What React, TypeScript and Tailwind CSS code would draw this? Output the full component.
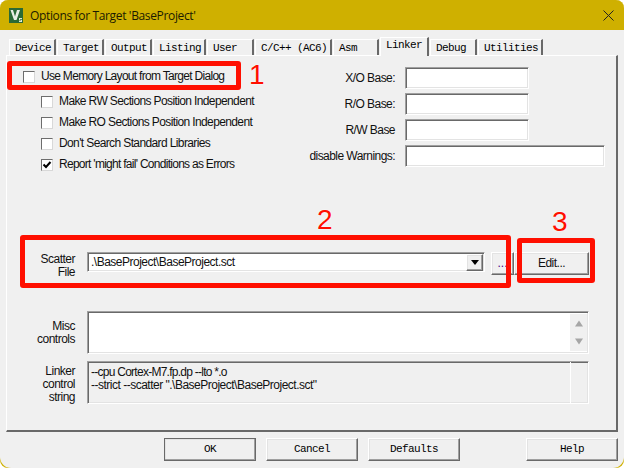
const sans = "font-['Liberation_Sans',Arial,sans-serif]";
const mono = "font-['Liberation_Mono','Courier_New',monospace]";
const sunken =
  "border border-t-[#a0a0a0] border-l-[#a0a0a0] border-r-white border-b-white shadow-[inset_1px_1px_0_#696969,inset_-1px_-1px_0_#e3e3e3]";
const raised =
  "border border-t-white border-l-white border-r-[#696969] border-b-[#696969] shadow-[inset_-1px_-1px_0_#a0a0a0,inset_1px_1px_0_#e3e3e3]";
const annotation = "absolute border-[5px] border-[#ff0f00] rounded-[3px]";
const digit =
  "absolute text-[28px] leading-[28px] text-[#ff0f00] font-['Liberation_Sans',sans-serif] [text-shadow:0_0_2px_#fff]";

const tabs = [
  { label: "Device", cls: "w-[47px]" },
  { label: "Target", cls: "w-[47px]" },
  { label: "Output", cls: "w-[47px]" },
  { label: "Listing", cls: "w-[53px]" },
  { label: "User", cls: "w-[47px]" },
  { label: "C/C++ (AC6)", cls: "w-[77px]" },
  { label: "Asm", cls: "w-[46px]" },
  { label: "Linker", cls: "w-[49px]", active: true },
  { label: "Debug", cls: "w-[47px]" },
  { label: "Utilities", cls: "w-[65px]" },
];

const options = [
  { label: "Make RW Sections Position Independent", cls: "tracking-[-0.62px]" },
  { label: "Make RO Sections Position Independent", cls: "tracking-[-0.62px]" },
  { label: "Don't Search Standard Libraries", cls: "tracking-[-0.62px]" },
  { label: "Report 'might fail' Conditions as Errors", cls: "tracking-[-0.72px]", checked: true },
];

const bases = [
  { label: "X/O Base:", cls: "w-[124px]" },
  { label: "R/O Base:", cls: "w-[124px]" },
  { label: "R/W Base", cls: "w-[124px]" },
  { label: "disable Warnings:", cls: "w-[200px]" },
];

function Checkbox({ checked }: { checked?: boolean }) {
  return (
    <span className="w-[12px] h-[12px] shrink-0 bg-white border border-t-[#6d6d6d] border-l-[#6d6d6d] border-r-[#d8d8d8] border-b-[#d8d8d8] flex items-center justify-center">
      {checked && (
        <svg width="10" height="10" viewBox="0 0 10 10">
          <path d="M1.5 4.5 L4 7 L8.5 2" fill="none" stroke="#000" strokeWidth="2" />
        </svg>
      )}
    </span>
  );
}

function FooterButton({ label, cls }: { label: string; cls: string }) {
  return (
    <div className={`${raised} ${cls} w-[92px] h-[23px] flex items-center justify-center text-[11px] tracking-[-0.6px] ${mono} text-black`}>
      {label}
    </div>
  );
}

function Arrow({ down }: { down?: boolean }) {
  return (
    <svg width="10" height="7" viewBox="0 0 10 7">
      <path d={down ? "M1 0.5 H9 L5 6.5 Z" : "M1 6.5 H9 L5 0.5 Z"} fill="#a6a6a6" />
    </svg>
  );
}

export default function App() {
  return (
    <div className={`relative w-[624px] h-[468px] bg-white overflow-hidden text-[12px] leading-[13px] text-[#111] ${sans}`}>
      <div className="w-full h-full bg-[#cfb000] rounded-[8px] overflow-hidden">
        <div className="w-full h-full bg-[#f0f0f0] rounded-b-[11px] flex flex-col">
          {/* Title bar */}
          <div className="h-[30px] shrink-0 bg-[#cfb000] flex items-center pl-[9px] pr-[10px]">
            <svg width="14" height="15" viewBox="0 0 14 15" className="shrink-0">
              <rect width="14" height="15" fill="#2b6a35" />
              <path d="M1.5 2 H4 L6 8.5 L8 2 H11 L7.5 12 H5 Z" fill="#e8efe4" />
              <path d="M5.5 2 H6.5 L6.5 6 Z" fill="#2b6a35" />
              <path d="M10 10 h3 v1 h-2 v.7 h2 v2.3 h-3 v-1 h2 v-.6 h-2 Z" fill="#dfe8d8" />
            </svg>
            <span className="ml-[7px] text-[12px] tracking-[-0.35px] text-[#1b1b00] font-['Open_Sans',sans-serif]">
              Options for Target 'BaseProject'
            </span>
            <svg width="11" height="11" viewBox="0 0 11 11" className="ml-auto">
              <path d="M0.5 0.5 L10.5 10.5 M10.5 0.5 L0.5 10.5" stroke="#222" strokeWidth="1" />
            </svg>
          </div>

          {/* Tabs */}
          <div className={`h-[25px] shrink-0 pl-[9px] flex items-end text-[11px] tracking-[-0.6px] text-black ${mono}`}>
            {tabs.map((t) => (
              <div
                key={t.label}
                className={`${t.cls} mr-[1px] pl-[5px] border-l border-t border-r-2 border-l-white border-t-white border-r-[#696969] whitespace-nowrap ${
                  t.active ? "relative z-10 h-[19px] -mb-[1px] bg-[#f0f0f0] pt-[1px]" : "h-[16px] pt-[2px] bg-[#f0f0f0]"
                }`}
              >
                {t.label}
              </div>
            ))}
          </div>

          {/* Linker page */}
          <div className="ml-[6px] w-[612px] h-[377px] shrink-0 border-l border-t border-r-2 border-b-2 border-l-white border-t-white border-r-[#696969] border-b-[#696969] flex flex-col">
            <div className="h-[196px] shrink-0 flex">
              <div className="w-[302px] shrink-0 pt-[10px] flex flex-col">
                <div className="h-[21px] pl-[16px] flex items-center gap-[6px]">
                  <Checkbox />
                  <span className="tracking-[-0.7px]">Use Memory Layout from Target Dialog</span>
                </div>
                <div className="mt-[4px] flex flex-col">
                  {options.map((o) => (
                    <div key={o.label} className="h-[21px] pl-[34px] flex items-center gap-[6px]">
                      <Checkbox checked={o.checked} />
                      <span className={o.cls}>{o.label}</span>
                    </div>
                  ))}
                </div>
              </div>
              <div className="pt-[11px] flex flex-col gap-[4px]">
                {bases.map((b) => (
                  <div key={b.label} className="h-[22px] flex items-center">
                    <span className="w-[86px] pt-[1px] text-right mr-[10px] whitespace-nowrap tracking-[-0.55px]">{b.label}</span>
                    <div className={`${sunken} ${b.cls} h-[22px] bg-white`} />
                  </div>
                ))}
              </div>
            </div>

            {/* Scatter file */}
            <div className="h-[23px] shrink-0 flex">
              <div className="w-[68px] pt-[1px] text-right tracking-[-0.5px]">Scatter<br />File</div>
              <div className={`${sunken} ml-[12px] w-[398px] h-[20px] bg-white flex items-center pl-[3px] pr-[1px]`}>
                <span className="flex-1 pt-[1px] tracking-[-0.5px]">.\BaseProject\BaseProject.sct</span>
                <div className={`${raised} w-[17px] h-[17px] bg-[#f0f0f0] flex items-center justify-center`}>
                  <svg width="8" height="5" viewBox="0 0 8 5">
                    <path d="M0 0 H8 L4 5 Z" fill="#000" />
                  </svg>
                </div>
              </div>
              <div className={`${raised} ml-[6px] w-[23px] h-[23px] flex items-center justify-center text-[#4b0082]`}>...</div>
              <div className={`${raised} w-[75px] h-[23px] flex items-center justify-center tracking-[-0.5px]`}>Edit...</div>
            </div>

            {/* Misc controls */}
            <div className="mt-[36px] h-[43px] shrink-0 flex">
              <div className="w-[68px] pt-[9px] text-right tracking-[-0.5px]">Misc<br />controls</div>
              <div className={`${sunken} ml-[12px] w-[502px] h-[43px] bg-white flex justify-end`}>
                <div className="w-[17px] my-[2px] mr-[1px] bg-[#f0f0f0] flex flex-col items-center justify-between py-[6px]">
                  <Arrow />
                  <Arrow down />
                </div>
              </div>
            </div>

            {/* Linker control string */}
            <div className="mt-[7px] h-[43px] shrink-0 flex">
              <div className="w-[68px] pt-[4px] text-right tracking-[-0.5px]">Linker<br />control<br />string</div>
              <div className={`${sunken} ml-[12px] w-[502px] h-[43px] flex`}>
                <div className="flex-1 pt-[4px] pl-[3px] whitespace-nowrap tracking-[-0.5px]">
                  <span className="tracking-[-0.74px]">--cpu Cortex-M7.fp.dp --lto *.o</span>
                  <br />
                  --strict --scatter ".\BaseProject\BaseProject.sct"
                </div>
                <div className="w-[18px] border-l border-l-white" />
              </div>
            </div>
          </div>

          {/* Footer buttons */}
          <div className="pt-[6px] flex">
            <FooterButton label="OK" cls="ml-[164px] !border-[#696969]" />
            <FooterButton label="Cancel" cls="ml-[10px]" />
            <FooterButton label="Defaults" cls="ml-[10px]" />
            <FooterButton label="Help" cls="ml-[66px]" />
          </div>
        </div>
      </div>

      {/* Red annotations drawn over the dialog */}
      <div className={`${annotation} left-[7px] top-[61px] w-[234px] h-[29px]`} />
      <div className={`${annotation} left-[20px] top-[235px] w-[491px] h-[53px]`} />
      <div className={`${annotation} left-[517px] top-[238px] w-[78px] h-[45px]`} />
      <span className={`${digit} left-[249px] top-[61px]`}>1</span>
      <span className={`${digit} left-[317px] top-[206px]`}>2</span>
      <span className={`${digit} left-[552px] top-[208px]`}>3</span>
    </div>
  );
}
